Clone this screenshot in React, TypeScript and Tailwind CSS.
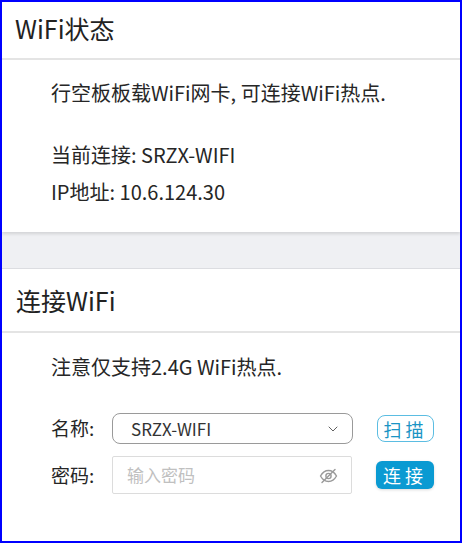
import { ChevronDown } from "lucide-react";

const font = { fontFamily: '"Noto Sans CJK SC", "Noto Sans", sans-serif' };

function EyeHidden() {
  return (
    <svg width="19" height="17" viewBox="0 0 19 17" fill="none" stroke="#9a9a9a" strokeWidth="1.4" strokeLinecap="round">
      <path d="M1.5 9 C4 4.5 7 3.5 9.5 3.5 C12 3.5 15 4.5 17.5 9 C15 13.5 12 14.5 9.5 14.5 C7 14.5 4 13.5 1.5 9 Z" />
      <circle cx="9.5" cy="9" r="2.6" />
      <path d="M3 15.5 L16 2.5" />
    </svg>
  );
}

export default function App() {
  return (
    <div
      className="box-border h-[543px] w-[462px] overflow-hidden border-2 border-[#0000ff] bg-[#eff0f3] text-[#222]"
      style={font}
    >
      {/* WiFi status */}
      <div className="bg-white shadow-[0_2px_3px_rgba(0,0,0,0.12)]">
        <div className="flex h-[58px] items-center border-b-2 border-[#e4e4e4] pb-[3px] pl-[13px] text-[25px]">
          WiFi状态
        </div>
        <div className="h-[172px] pl-[49px] pt-[19px] text-[20px] leading-[28px] text-[#262626]">
          <p>行空板板载WiFi网卡, 可连接WiFi热点.</p>
          <p className="mt-[34px]">当前连接: SRZX-WIFI</p>
          <p className="mt-[9px]">IP地址: 10.6.124.30</p>
        </div>
      </div>

      <div className="h-[36px]" />

      {/* Connect WiFi */}
      <div className="h-[273px] border-t border-[#dcdde1] bg-white">
        <div className="flex h-[64px] items-center border-b-2 border-[#e4e4e4] pl-[14px] pt-[2px] text-[25px]">
          连接WiFi
        </div>
        <div className="pl-[49px] pt-[20px] text-[#262626]">
          <p className="text-[20px] leading-[28px]">注意仅支持2.4G WiFi热点.</p>

          <div className="mt-[32px] flex items-center">
            <span className="w-[61px] text-[19px]">名称:</span>
            <div className="flex h-[31px] w-[241px] items-center justify-between rounded-[8px] border border-[#9a9a9a] pl-[18px] pr-[11px] text-[17px] text-[#333]">
              <span>SRZX-WIFI</span>
              <ChevronDown size={16} strokeWidth={1.4} className="text-[#555]" />
            </div>
            <button className="ml-[24px] h-[27px] w-[57px] rounded-[8px] border border-[#5bbde2] text-[18px] leading-none tracking-[4px] text-[#1a94c4]">
              扫描
            </button>
          </div>

          <div className="mt-[12px] flex items-center">
            <span className="w-[61px] text-[19px]">密码:</span>
            <div className="flex h-[38px] w-[240px] items-center justify-between rounded-[2px] border border-[#dcdcdc] pl-[14px] pr-[13px]">
              <span className="text-[17px] text-[#c0c0c0]">输入密码</span>
              <EyeHidden />
            </div>
            <button className="ml-[24px] h-[28px] w-[58px] rounded-[6px] bg-[#0a9ad2] text-[18px] leading-none tracking-[4px] text-white shadow-[0_1px_3px_rgba(0,0,0,0.15)]">
              连接
            </button>
          </div>
        </div>
      </div>
    </div>
  );
}
